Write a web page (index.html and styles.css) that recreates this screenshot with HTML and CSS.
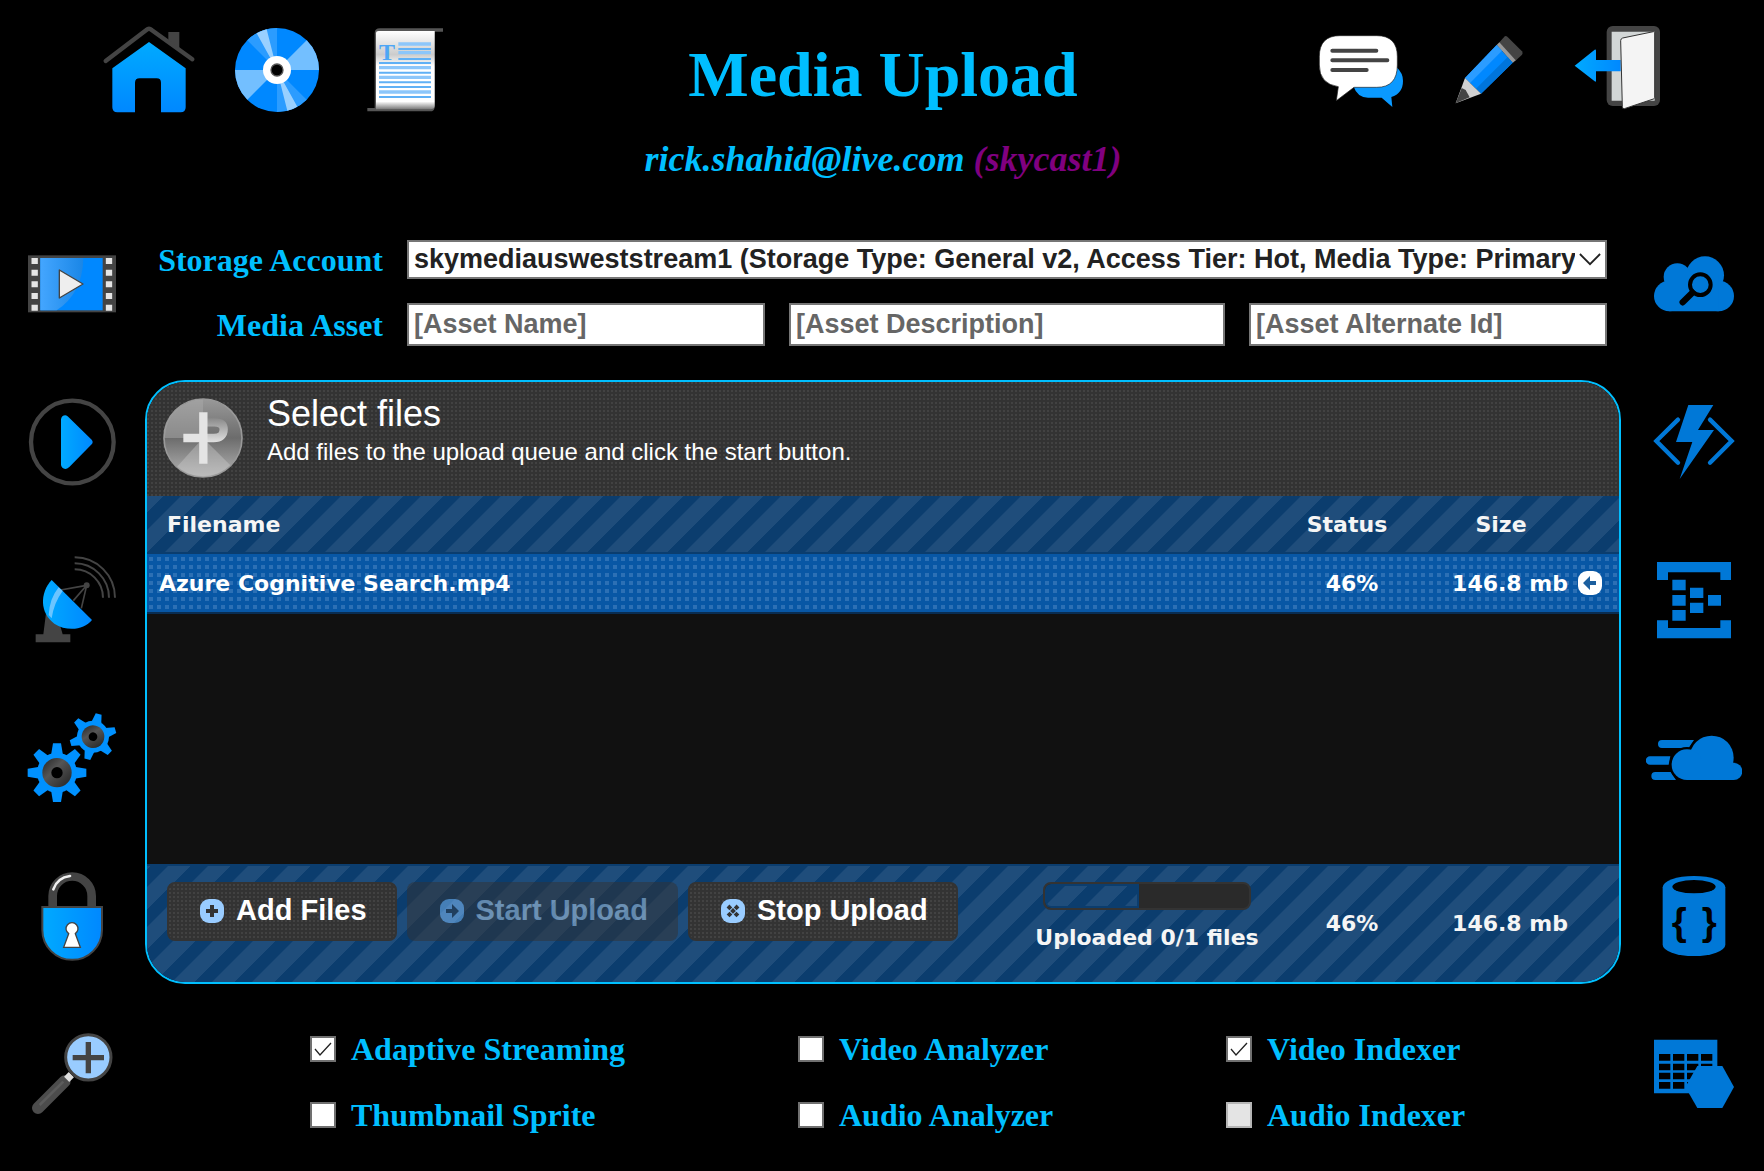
FILE: index.html
```html
<!DOCTYPE html>
<html lang="en">
<head>
<meta charset="utf-8">
<title>Media Upload</title>
<link rel="stylesheet" href="styles.css">
</head>
<body>
<svg class="defs" aria-hidden="true">
  <defs>
    <linearGradient id="blue-v" x1="0" y1="0" x2="0" y2="1"><stop offset="0" stop-color="#00aaff"/><stop offset="1" stop-color="#0088ff"/></linearGradient>
    <linearGradient id="blue-h" x1="0" y1="0" x2="1" y2="0"><stop offset="0" stop-color="#00aaff"/><stop offset="1" stop-color="#0088ff"/></linearGradient>
    <linearGradient id="paper" x1="0" y1="0" x2="0" y2="1"><stop offset="0" stop-color="#fff"/><stop offset=".3" stop-color="#ccc"/><stop offset=".45" stop-color="#fff"/><stop offset=".9" stop-color="#fff"/><stop offset="1" stop-color="#777"/></linearGradient>
    <linearGradient id="sheen" x1="0" y1="0" x2="1" y2="0"><stop offset="0" stop-color="#44a6ff"/><stop offset="1" stop-color="#1a86e6"/></linearGradient>
    <linearGradient id="hub" x1="0" y1="0" x2="1" y2="1"><stop offset="0" stop-color="#222"/><stop offset=".4" stop-color="#555"/><stop offset="1" stop-color="#222"/></linearGradient>
    <linearGradient id="disc" x1="0" y1="0" x2="0" y2="1"><stop offset="0" stop-color="#999"/><stop offset=".5" stop-color="#6c6c6c"/><stop offset="1" stop-color="#b4b4b4"/></linearGradient>
    <linearGradient id="loop" gradientUnits="userSpaceOnUse" x1="0" y1="145" x2="0" y2="216"><stop offset="0" stop-color="#8a8a8a"/><stop offset="1" stop-color="#e0e0e0"/></linearGradient>
  </defs>
</svg>

<header class="top">
  <nav class="top-links" aria-label="Main">
    <a href="#home" aria-label="Home"><svg class="icon" viewBox="33 36 288 288">
      <path d="M235 66h33v56l-33-24z" fill="#444"/>
      <path d="M47 153L169 60Q177 53 185 60L307 148" fill="none" stroke="#444" stroke-width="13" stroke-linecap="round"/>
      <path d="M67 175L177 96L287 175V292Q287 307 272 307H213V218Q213 205 200 205H149Q135 205 135 218V307H82Q67 307 67 292Z" fill="url(#blue-v)"/>
    </svg></a>
    <a href="#library" aria-label="Library"><svg class="icon" viewBox="417 36 288 288">
      <circle cx="561" cy="180" r="126" fill="#0088ff"/>
      <path d="M561 180L650 91A126 126 0 0 1 687 180ZM561 180L472 269A126 126 0 0 1 435 180Z" fill="#73bfff"/>
      <path d="M561 180L472 91A126 126 0 0 1 561 54ZM561 180L650 269A126 126 0 0 1 561 306Z" fill="#2b9cff"/>
      <path d="M561 180L500 70A126 126 0 0 1 530 58ZM561 180L622 290A126 126 0 0 1 592 302Z" fill="#99d0ff"/>
      <circle cx="561" cy="180" r="42" fill="#fff"/><circle cx="561" cy="180" r="18" stroke="#555" stroke-width="4"/>
    </svg></a>
    <a href="#documents" aria-label="Documents"><svg class="icon" viewBox="801 36 288 288">
      <path d="M860 55H1059V65H1034V290Q1034 304 1020 304H832V294H854V70Q854 55 870 55Z" fill="#555"/>
      <path d="M858 70Q858 63 866 63H1034V288Q1034 298 1020 298H858Z" fill="url(#paper)"/>
      <text x="891" y="150" text-anchor="middle" font-family="Liberation Serif" font-weight="700" font-size="72" fill="#4da6f5">T</text>
      <path d="M925 102H1023M925 128H1023M867 173H1023M867 202H1023M867 246H1023" stroke="#8cc6fa" stroke-width="10"/>
      <path d="M925 117H1023M925 147H1023M867 159H1023M867 188H1023M867 217H1023M867 231H1023M867 261H1023" stroke="#5fb0f5" stroke-width="6"/>
    </svg></a>
  </nav>
  <div class="heading">
    <h1>Media Upload</h1>
    <p class="account">rick.shahid@live.com <span class="tenant">(skycast1)</span></p>
  </div>
  <nav class="top-links top-links-end" aria-label="Account">
    <a href="#feedback" aria-label="Feedback"><svg class="icon" viewBox="39 36 288 288">
      <path d="M160 228Q172 263 204 263H245L277 291L274 261Q309 250 309 212Q309 190 290 172Z" fill="#0a99ff"/>
      <path d="M120 77H230Q292 77 292 140V165Q292 232 230 232H162L109 272L115 230Q58 222 58 165V140Q58 77 120 77Z" fill="#fff" stroke="#222" stroke-width="2"/>
      <path d="M97 122H229M97 151H262M97 180H200" stroke="#444" stroke-width="12" stroke-linecap="round"/>
    </svg></a>
    <a href="#edit" aria-label="Edit"><svg class="icon" viewBox="423 36 288 288">
      <path d="M597 98L613 80Q617 76 622 80L666 124Q670 129 666 134L646 153Z" fill="#444"/>
      <path d="M590 105L598 97L647 151L638 159Z" fill="#999"/>
      <path d="M495 204L590 105L638 158L543 251Z" fill="#0088ff"/>
      <path d="M495 204L590 105L606 122L510 219Z" fill="#2b9cff"/>
      <path d="M528 236L623 141L638 158L543 251Z" fill="#0075dc"/>
      <path d="M495 204L543 251L467 280Z" fill="#d0d0d0"/><path d="M467 280L485 234L497 240L509 262Z" fill="#444"/>
    </svg></a>
    <a href="#signout" aria-label="Sign out"><svg class="icon" viewBox="807 36 288 288">
      <rect x="920" y="48" width="160" height="240" rx="18" fill="#444"/>
      <path d="M935 65H1064V272H935Z" fill="#d2d6d6"/>
      <path d="M824 167L884 119Q888 117 888 122V150H962V184H888V212Q888 217 884 214Z" fill="url(#blue-h)"/>
      <path d="M962 92Q962 86 968 84L1060 65Q1064 64 1064 68V262Q1064 266 1060 267L973 296Q967 297 967 290Z" fill="#f4f4f4" stroke="#333" stroke-width="3"/>
    </svg></a>
  </nav>
</header>

<div class="layout">
  <nav class="side" aria-label="Media">
    <a href="#gallery" aria-label="Gallery"><svg class="icon" viewBox="42 18 288 288">
      <rect x="54" y="76" width="264" height="171" fill="#444"/>
      <rect x="91" y="84" width="187" height="157" fill="#0088ff"/>
      <path d="M91 84H220Q218 190 140 241H91Z" fill="url(#sheen)"/>
      <path d="M74 84V245M297 84V245" stroke="#e6e6e6" stroke-width="19" stroke-dasharray="18 17"/>
      <path d="M148 120L219 162L148 204Z" fill="#eee" stroke="#444" stroke-width="4" stroke-linejoin="round"/>
    </svg></a>
    <a href="#player" aria-label="Player"><svg class="icon" viewBox="42 492 288 288">
      <circle cx="187" cy="636" r="124" fill="none" stroke="#444" stroke-width="13"/>
      <path d="M153 568Q155 556 166 556Q171 556 176 562L245 629Q251 636 245 643L178 711Q171 717 166 717Q155 716 153 705Z" fill="url(#blue-h)"/>
    </svg></a>
    <a href="#live" aria-label="Live"><svg class="icon" viewBox="42 966 288 288">
      <path d="M194 982A121 121 0 0 1 315 1103M194 1000A103 103 0 0 1 297 1103M194 1018A85 85 0 0 1 279 1103" fill="none" stroke="#444" stroke-width="6"/>
      <path d="M152 1080L230 1066L190 1112M230 1066L214 1135" fill="none" stroke="#444" stroke-width="5"/>
      <circle cx="230" cy="1066" r="9" fill="#444"/>
      <path d="M108 1150L150 1185L158 1213H181V1237H77V1213H100Z" fill="#444"/>
      <path d="M125 1050C88 1090 90 1150 133 1181C170 1205 222 1201 246 1170Z" fill="url(#blue-h)"/>
      <path d="M146 1072L158 1083Q132 1118 125 1165L116 1155Q119 1105 146 1072Z" fill="#8fd0ff" opacity=".75"/>
    </svg></a>
    <a href="#settings" aria-label="Processing"><svg class="icon" viewBox="42 60 288 288">
      <g transform="translate(141 248)" fill="#0091ff">
        <g id="teeth4"><path d="M-18-52L-12-88H12L18-52V52L12 88H-12L-18 52Z"/><path transform="rotate(90)" d="M-18-52L-12-88H12L18-52V52L12 88H-12L-18 52Z"/></g>
        <use href="#teeth4" transform="rotate(45)"/><circle r="60"/><circle r="44" fill="url(#hub)"/><circle r="17" fill="#000"/>
      </g>
      <g transform="translate(249 140) rotate(14)" fill="#0091ff">
        <path id="tooth" d="M-15-42L-9-70H9L15-42V42L9 70H-9L-15 42Z"/>
        <use href="#tooth" transform="rotate(60)"/><use href="#tooth" transform="rotate(120)"/>
        <circle r="48"/><circle r="34" fill="url(#hub)"/><circle r="13" fill="#000"/>
      </g>
    </svg></a>
    <a href="#protection" aria-label="Protection"><svg class="icon" viewBox="42 534 288 288">
      <path d="M128 652V618A58 58 0 0 1 245 618V652" fill="none" stroke="#444" stroke-width="26"/>
      <path d="M130 598Q142 563 180 558" fill="none" stroke="#eee" stroke-width="8" stroke-linecap="round"/>
      <path d="M97 651H276V720A89 89 0 0 1 97 720Z" fill="url(#blue-h)" stroke="#444" stroke-width="6"/>
      <path d="M176 731A18 18 0 1 1 196 731L211 772H161Z" fill="#fff" stroke="#444" stroke-width="4"/>
    </svg></a>
    <a href="#search" aria-label="Search"><svg class="icon" viewBox="42 1008 288 288">
      <path d="M84 1254L164 1174" stroke="#4c4c4c" stroke-width="36" stroke-linecap="round"/>
      <path d="M89 1245L160 1175" stroke="#5c5c5c" stroke-width="8"/>
      <path d="M170 1168L184 1154" stroke="#ddd" stroke-width="22"/>
      <circle cx="235" cy="1102" r="68" fill="#99ccff" stroke="#444" stroke-width="9"/>
      <path d="M188 1103H282M235 1056V1150" stroke="#444" stroke-width="16"/>
    </svg></a>
  </nav>

  <main class="main">
    <form class="asset-form">
      <label class="field-label" for="storage">Storage Account</label>
      <div class="select-wrap">
        <select id="storage" class="control select"><option>skymediausweststream1 (Storage Type: General v2, Access Tier: Hot, Media Type: Primary)</option></select>
        <svg class="chevron" viewBox="0 0 24 14" aria-hidden="true"><path d="M1 1L12 12L23 1" fill="none" stroke="#222" stroke-width="2"/></svg>
      </div>
      <label class="field-label" for="asset-name">Media Asset</label>
      <div class="asset-fields">
        <input id="asset-name" class="control" type="text" placeholder="[Asset Name]">
        <input class="control" type="text" aria-label="Asset Description" placeholder="[Asset Description]">
        <input class="control" type="text" aria-label="Asset Alternate Id" placeholder="[Asset Alternate Id]">
      </div>
    </form>

    <section class="uploader">
      <div class="uploader-head">
        <svg class="uploader-logo" viewBox="68 84 240 240" aria-hidden="true">
          <circle cx="188" cy="204" r="117" fill="url(#disc)" stroke="#999" stroke-width="5"/>
          <path d="M72 204A116 116 0 0 1 188 88V204Z" fill="#aaa" opacity=".5"/>
          <path d="M188 204L110 290A116 116 0 0 0 270 286Z" fill="#ccc" opacity=".4"/>
          <path d="M200 157H222Q250 157 250 178Q250 204 220 204H195" fill="none" stroke="url(#loop)" stroke-width="25"/>
          <path d="M129 204H200M189 127V281" stroke="#e4e4e4" stroke-width="25"/>
        </svg>
        <div>
          <h2>Select files</h2>
          <p>Add files to the upload queue and click the start button.</p>
        </div>
      </div>
      <table class="queue">
        <thead>
          <tr><th class="col-name" scope="col">Filename</th><th class="col-status" scope="col">Status</th><th class="col-size" scope="col">Size</th><td class="col-action"></td></tr>
        </thead>
        <tbody>
          <tr><td>Azure Cognitive Search.mp4</td><td class="status">46%</td><td class="size">146.8 mb</td>
          <td class="action"><button class="remove" type="button" aria-label="Remove"><svg viewBox="0 0 24 24"><rect width="24" height="24" rx="9" fill="#fff"/><path d="M5 12L12 5V10H18V14H12V19Z" fill="#1c5f9f"/></svg></button></td></tr>
        </tbody>
      </table>
      <div class="queue-space"></div>
      <div class="uploader-foot">
        <div class="actions">
          <button class="btn" type="button"><svg viewBox="0 0 24 24"><rect width="24" height="24" rx="9" fill="#99ccff"/><path d="M12 6V18M6 12H18" stroke="#333" stroke-width="4"/></svg>Add Files</button>
          <button class="btn" type="button" disabled><svg viewBox="0 0 24 24"><rect width="24" height="24" rx="9" fill="#7fc0ff"/><path d="M19 12L12 5V10H6V14H12V19Z" fill="#234"/></svg>Start Upload</button>
          <button class="btn" type="button"><svg viewBox="0 0 24 24"><rect width="24" height="24" rx="9" fill="#99ccff"/><path d="M7 7L17 17M17 7L7 17" stroke="#333" stroke-width="4" stroke-dasharray="4 1"/></svg>Stop Upload</button>
        </div>
        <div class="progress">
          <div class="progress-track" role="progressbar" aria-valuenow="46" aria-valuemin="0" aria-valuemax="100" aria-label="Upload progress"><div class="progress-bar" style="width:46%"></div></div>
          <span>Uploaded 0/1 files</span>
        </div>
        <span class="total-status">46%</span>
        <span class="total-size">146.8 mb</span>
      </div>
    </section>

    <div class="options">
      <label class="option"><input type="checkbox" checked>Adaptive Streaming</label>
      <label class="option"><input type="checkbox">Video Analyzer</label>
      <label class="option"><input type="checkbox" checked>Video Indexer</label>
      <label class="option"><input type="checkbox">Thumbnail Sprite</label>
      <label class="option"><input type="checkbox">Audio Analyzer</label>
      <label class="option"><input type="checkbox" disabled>Audio Indexer</label>
    </div>
  </main>

  <nav class="side side-end" aria-label="Services">
    <a href="#cloud-search" aria-label="Cloud Search"><svg class="icon azure" viewBox="48 18 288 288">
      <circle cx="225" cy="136" r="57"/><circle cx="142" cy="141" r="41"/><circle cx="118" cy="198" r="46"/><circle cx="266" cy="198" r="46"/><path d="M118 130H266V244H118Z"/>
      <circle cx="211" cy="164" r="31" fill="none" stroke="#000" stroke-width="12"/><path d="M187 188L158 217" stroke="#000" stroke-width="19" stroke-linecap="round"/>
    </svg></a>
    <a href="#functions" aria-label="Functions"><svg class="icon azure" viewBox="48 492 288 288">
      <path d="M175 525H250L204 600H252L149 747L187 636H138Z"/>
      <path d="M144 569L79 633L144 698M240 569L305 633L240 698" fill="none" stroke="#0078d7" stroke-width="13" stroke-linecap="round"/>
    </svg></a>
    <a href="#events" aria-label="Event Hub"><svg class="icon azure" viewBox="48 966 288 288">
      <path d="M81 996H303V1050H271V1027H114V1050H81ZM81 1225H303V1171H271V1194H114V1171H81ZM127 1049h40v32h-40zM127 1095h40v32h-40zM127 1140h40v32h-40zM180 1073h40v31h-40zM180 1118h40v31h-40zM234 1095h39v32h-39z"/>
    </svg></a>
    <a href="#cdn" aria-label="Content Delivery"><svg class="icon azure" viewBox="48 60 288 288">
      <path d="M96 150H192L176 174H96A12 12 0 0 1 96 150ZM60 199H121L116 224H60A12 12 0 0 1 60 199ZM76 246H122L138 270H76A12 12 0 0 1 76 246Z"/>
      <circle cx="171" cy="224" r="53" fill="#000"/><circle cx="245" cy="203" r="73" fill="#000"/>
      <circle cx="245" cy="203" r="66"/><circle cx="171" cy="224" r="46"/><circle cx="311" cy="244" r="26"/><path d="M171 218H311V270H171Z"/>
    </svg></a>
    <a href="#database" aria-label="Document Database"><svg class="icon azure" viewBox="48 534 288 288">
      <path d="M98 592A94 34 0 0 1 286 592V764A94 34 0 0 1 98 764Z"/><ellipse cx="192" cy="590" rx="65" ry="20" fill="#000"/>
      <text x="148" y="736" text-anchor="middle" font-family="Liberation Sans" font-weight="700" font-size="116" fill="#000">{</text>
      <text x="238" y="736" text-anchor="middle" font-family="Liberation Sans" font-weight="700" font-size="116" fill="#000">}</text>
    </svg></a>
    <a href="#tables" aria-label="Table Storage"><svg class="icon azure" viewBox="48 1008 288 288">
      <path d="M72 1049H262V1210H72Z"/>
      <path d="M87 1102H247M87 1131H247M87 1158H247M87 1186H247" stroke="#000" stroke-width="20" stroke-dasharray="34 8"/>
      <path d="M166 1191L202 1128H277L312 1191L277 1254H202Z"/>
    </svg></a>
  </nav>
</div>
</body>
</html>
```

FILE: styles.css
```css
* { box-sizing: border-box; }

body {
  margin: 0;
  background: #000;
  color: #00bfff;
  font-family: "Liberation Serif", "Times New Roman", serif;
}

h1, h2, p { margin: 0; }

svg { display: block; }

.defs { position: absolute; width: 0; height: 0; }

.icon { width: 96px; height: 96px; }
.azure { fill: #0078d7; }

/* Page header */
.top {
  display: grid;
  grid-template-columns: 1fr auto 1fr;
  align-items: start;
  padding: 22px 99px 0 101px;
}
.top-links { display: flex; gap: 32px; }
.top-links-end { justify-content: flex-end; }
.heading { padding: 17px 0 57px; text-align: center; }
.heading h1 { font-size: 64px; line-height: 72px; }
.account {
  margin-top: 28px;
  font-size: 36px;
  font-style: italic;
  font-weight: 700;
  line-height: 40px;
}
.tenant { color: #800080; }

/* Columns */
.layout {
  display: grid;
  grid-template-columns: 145px minmax(0, 1fr) 143px;
}
.side {
  display: flex;
  flex-direction: column;
  gap: 62px;
  padding-left: 24px;
}
.side-end { padding-left: 25px; }
.main { padding-top: 4px; }

/* Asset form */
.asset-form {
  display: grid;
  grid-template-columns: 238px minmax(0, 1fr);
  gap: 24px;
  align-items: center;
  padding-right: 14px;
}
.field-label {
  font-size: 32px;
  font-weight: 700;
  line-height: 36px;
  text-align: right;
  white-space: nowrap;
}
.control {
  width: 100%;
  min-width: 0;
  height: 43px;
  padding: 0 5px;
  border: 2px solid #767676;
  border-radius: 0;
  background: #fff;
  color: #222;
  font: 700 27px "Liberation Sans", Arial, sans-serif;
}
.control::placeholder { color: #666; opacity: 1; }
.select-wrap { position: relative; }
.select {
  display: block;
  height: 39px;
  padding: 0 30px 2px 5px;
  appearance: none;
}
.chevron {
  position: absolute;
  top: 13px;
  right: 6px;
  width: 22px;
  height: 13px;
  pointer-events: none;
}
.asset-fields {
  display: grid;
  grid-template-columns: 358fr 436fr 358fr;
  gap: 24px;
}

/* Upload panel */
.uploader {
  margin-top: 34px;
  overflow: hidden;
  border: 2px solid #00bfff;
  border-radius: 40px;
  background: #111;
  color: #fff;
  font: 700 22px "DejaVu Sans", Verdana, sans-serif;
}
.uploader-head, .btn {
  background-color: #333;
  background-image: conic-gradient(at 2px 2px, transparent 75%, #424242 0);
  background-size: 4px 4px;
}
.uploader-head {
  display: flex;
  gap: 24px;
  height: 114px;
  padding: 10px 16px 0;
  font-family: "Liberation Sans", Arial, sans-serif;
  font-weight: 400;
}
.uploader-logo { width: 80px; height: 80px; margin-top: 6px; }
.uploader-head h2 { font-size: 36px; font-weight: 400; line-height: 44px; }
.uploader-head p { font-size: 24px; line-height: 32px; }

.queue thead, .uploader-foot, .progress-bar {
  background-color: #0b3d6e;
  background-image: linear-gradient(135deg, #0b3d6e 22%, #1f4d7b 23% 50%, #0b3d6e 51% 72%, #1f4d7b 73%);
  background-size: 40px 40px;
}
.queue {
  width: 100%;
  border-collapse: separate;
  border-spacing: 0;
  table-layout: fixed;
}
.queue thead { background-position: 16px 0; }
.queue th, .queue td { height: 58px; padding: 0; white-space: nowrap; }
.queue thead tr { color: #f5f5f5; }
.queue thead th, .queue thead td { border-bottom: 2px solid #0b3d6e; }
.queue tbody tr {
  background-color: #0857a5;
  background-image: conic-gradient(at 4px 4px, transparent 75%, #2c70b5 0);
  background-position: 2px 3px;
  background-size: 8px 8px;
}
.queue tbody td { height: 60px; padding-left: 12px; border-bottom: 2px solid #092d52; }
.queue .col-name { padding-left: 20px; text-align: left; }
.queue .col-status { width: 164px; padding-right: 10px; }
.queue .col-size { width: 134px; }
.queue .col-action { width: 51px; }
.queue tbody .status { padding: 0; text-align: center; }
.queue tbody .size { padding: 0; text-align: right; }
.queue tbody .action { padding-left: 10px; }
.remove {
  display: block;
  width: 24px;
  height: 24px;
  padding: 0;
  border: 0;
  background: none;
}
.queue-space { height: 250px; }

.uploader-foot {
  display: grid;
  grid-template-columns: minmax(0, 1fr) 246px 164px 134px;
  align-items: start;
  height: 118px;
  padding: 16px 51px 0 20px;
  border-top: 2px solid #0b3d6e;
  background-position: 3px 0;
  color: #f5f5f5;
}
.actions { display: flex; gap: 10px; }
.btn {
  display: flex;
  align-items: center;
  gap: 12px;
  height: 59px;
  padding: 0 28px 2px 31px;
  border: 2px solid #333;
  border-radius: 8px;
  color: #fff;
  font: 700 29px "Liberation Sans", Arial, sans-serif;
  white-space: nowrap;
}
.btn svg { width: 24px; height: 24px; }
.btn:disabled {
  border-color: transparent;
  background: #333;
  color: #b8d4ee;
  opacity: .5;
}
.progress { text-align: center; line-height: 28px; }
.progress-track {
  width: 208px;
  height: 28px;
  margin: 0 auto 14px;
  overflow: hidden;
  border: 2px solid #333;
  border-radius: 8px;
  background-color: #2a2a2a;
}
.progress-bar {
  height: 24px;
  border: 2px solid #0b3d6e;
  border-radius: 6px 0 0 6px;
}
.total-status, .total-size { margin-top: 28px; line-height: 28px; }
.total-status { text-align: center; }
.total-size { text-align: right; }

/* Processing options */
.options {
  display: grid;
  grid-template-columns: 488fr 428fr 395fr;
  row-gap: 30px;
  padding: 47px 0 0 165px;
}
.option {
  display: flex;
  align-items: center;
  gap: 15px;
  font-size: 32px;
  font-weight: 700;
  line-height: 36px;
  white-space: nowrap;
}
.option input {
  width: 26px;
  height: 26px;
  margin: 0;
  border: 2px solid #707070;
  background: #fff;
  appearance: none;
}
.option input:checked {
  background: #fff url("data:image/svg+xml,%3Csvg xmlns='http://www.w3.org/2000/svg' viewBox='0 0 22 22'%3E%3Cpath d='M3 11L8 17L19 5' fill='none' stroke='%23222' stroke-width='1.3'/%3E%3C/svg%3E") center / 22px no-repeat;
}
.option input:disabled { border-color: #b5b5b5; background: #e4e4e4; }
```
